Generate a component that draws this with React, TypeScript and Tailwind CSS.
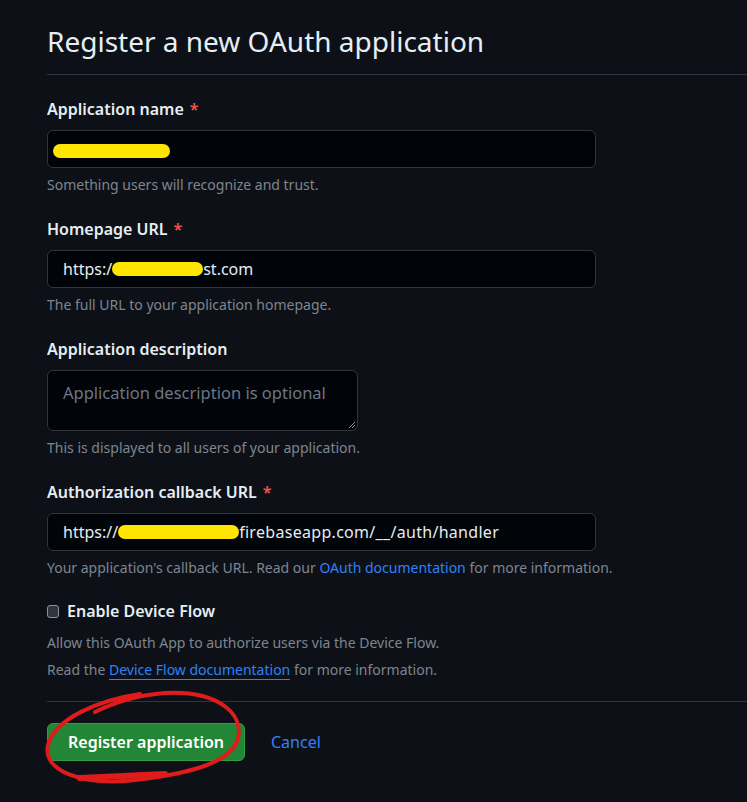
import React from 'react';

const font = { fontFamily: '"Noto Sans", "Liberation Sans", sans-serif' };

function Blob({ w }: { w: number }) {
  return (
    <span
      className="inline-block h-[14px] rounded-full bg-[#ffe500] align-middle"
      style={{ width: w }}
    />
  );
}

function Field({
  label,
  required,
  children,
  help,
}: {
  label: string;
  required?: boolean;
  children: React.ReactNode;
  help: React.ReactNode;
}) {
  return (
    <div className="mt-[22px]">
      <label className="block text-[16px] font-semibold leading-6 text-[#e6edf3]">
        {label}
        {required && <span className="ml-[6px] text-[#f85149]">*</span>}
      </label>
      <div className="mt-[9px]">{children}</div>
      <p className="mt-[7px] text-[14px] leading-5 text-[#7d8590]">{help}</p>
    </div>
  );
}

function TextInput({ children }: { children: React.ReactNode }) {
  return (
    <div className="flex h-[38px] w-[549px] items-center rounded-[6px] border border-[#30363d] bg-[#010409] px-[15px] text-[16px] text-[#e6edf3]">
      {children}
    </div>
  );
}

export default function App() {
  return (
    <div className="relative min-h-[802px] overflow-hidden bg-[#0d1117] pl-[47px]" style={font}>
      <h2 className="border-b border-[#30363d] pt-[24px] pb-[15px] text-[28px] leading-[35px] font-normal text-[#e6edf3]">
        Register a new OAuth application
      </h2>

      <Field label="Application name" required help="Something users will recognize and trust.">
        <TextInput>
          <span className="-ml-[10px]">
            <Blob w={117} />
          </span>
        </TextInput>
      </Field>

      <Field label="Homepage URL" required help="The full URL to your application homepage.">
        <TextInput>
          <span>https:/</span>
          <Blob w={91} />
          <span>st.com</span>
        </TextInput>
      </Field>

      <Field label="Application description" help="This is displayed to all users of your application.">
        <div className="relative h-[61px] w-[311px] rounded-[6px] border border-[#30363d] bg-[#010409] px-[15px] pt-[10px] text-[16.5px] text-[#6e7681]">
          Application description is optional
          <svg className="absolute right-[1px] bottom-[1px]" width="8" height="8" viewBox="0 0 8 8">
            <path d="M7 1 L1 7 M7 4 L4 7" stroke="#8b949e" strokeWidth="1" />
          </svg>
        </div>
      </Field>

      <Field
        label="Authorization callback URL"
        required
        help={
          <>
            Your application's callback URL. Read our{' '}
            <span className="text-[#2f81f7]">OAuth documentation</span> for more information.
          </>
        }
      >
        <TextInput>
          <span>https://</span>
          <Blob w={121} />
          <span className="tracking-[0.3px]">firebaseapp.com/__/auth/handler</span>
        </TextInput>
      </Field>

      <div className="mt-[21px] flex items-center gap-[8px]">
        <span className="h-[13px] w-[12px] rounded-[3px] border border-[#8b949e] bg-[#30363d]" />
        <span className="text-[16px] font-semibold leading-6 text-[#e6edf3]">Enable Device Flow</span>
      </div>
      <p className="mt-[10px] text-[14px] leading-5 text-[#7d8590]">
        Allow this OAuth App to authorize users via the Device Flow.
      </p>
      <p className="mt-[7px] text-[14px] leading-5 text-[#7d8590]">
        Read the{' '}
        <span className="border-b border-[#2f81f7] text-[#2f81f7]">Device Flow documentation</span> for
        more information.
      </p>

      <div className="mt-[21px] border-t border-[#30363d]" />

      <div className="mt-[21px] flex items-center gap-[26px]">
        <button className="h-[38px] rounded-[6px] border border-[#2ea043] bg-[#238636] px-[20px] text-[16px] font-semibold text-white">
          Register application
        </button>
        <span className="text-[16px] text-[#2f81f7]">Cancel</span>
      </div>

      <svg
        className="pointer-events-none absolute top-0 left-0"
        width="747"
        height="802"
        viewBox="0 0 747 802"
        fill="none"
      >
        <path
          d="M140 694 C100 700 55 718 48 745 C42 772 85 786 135 780 C185 774 232 764 238 738 C244 712 215 690 165 693 C140 695 115 702 95 712"
          stroke="#e01b1b"
          strokeWidth="4"
          strokeLinecap="round"
        />
        <path d="M80 778 L165 774" stroke="#e01b1b" strokeWidth="6" strokeLinecap="round" />
      </svg>
    </div>
  );
}
